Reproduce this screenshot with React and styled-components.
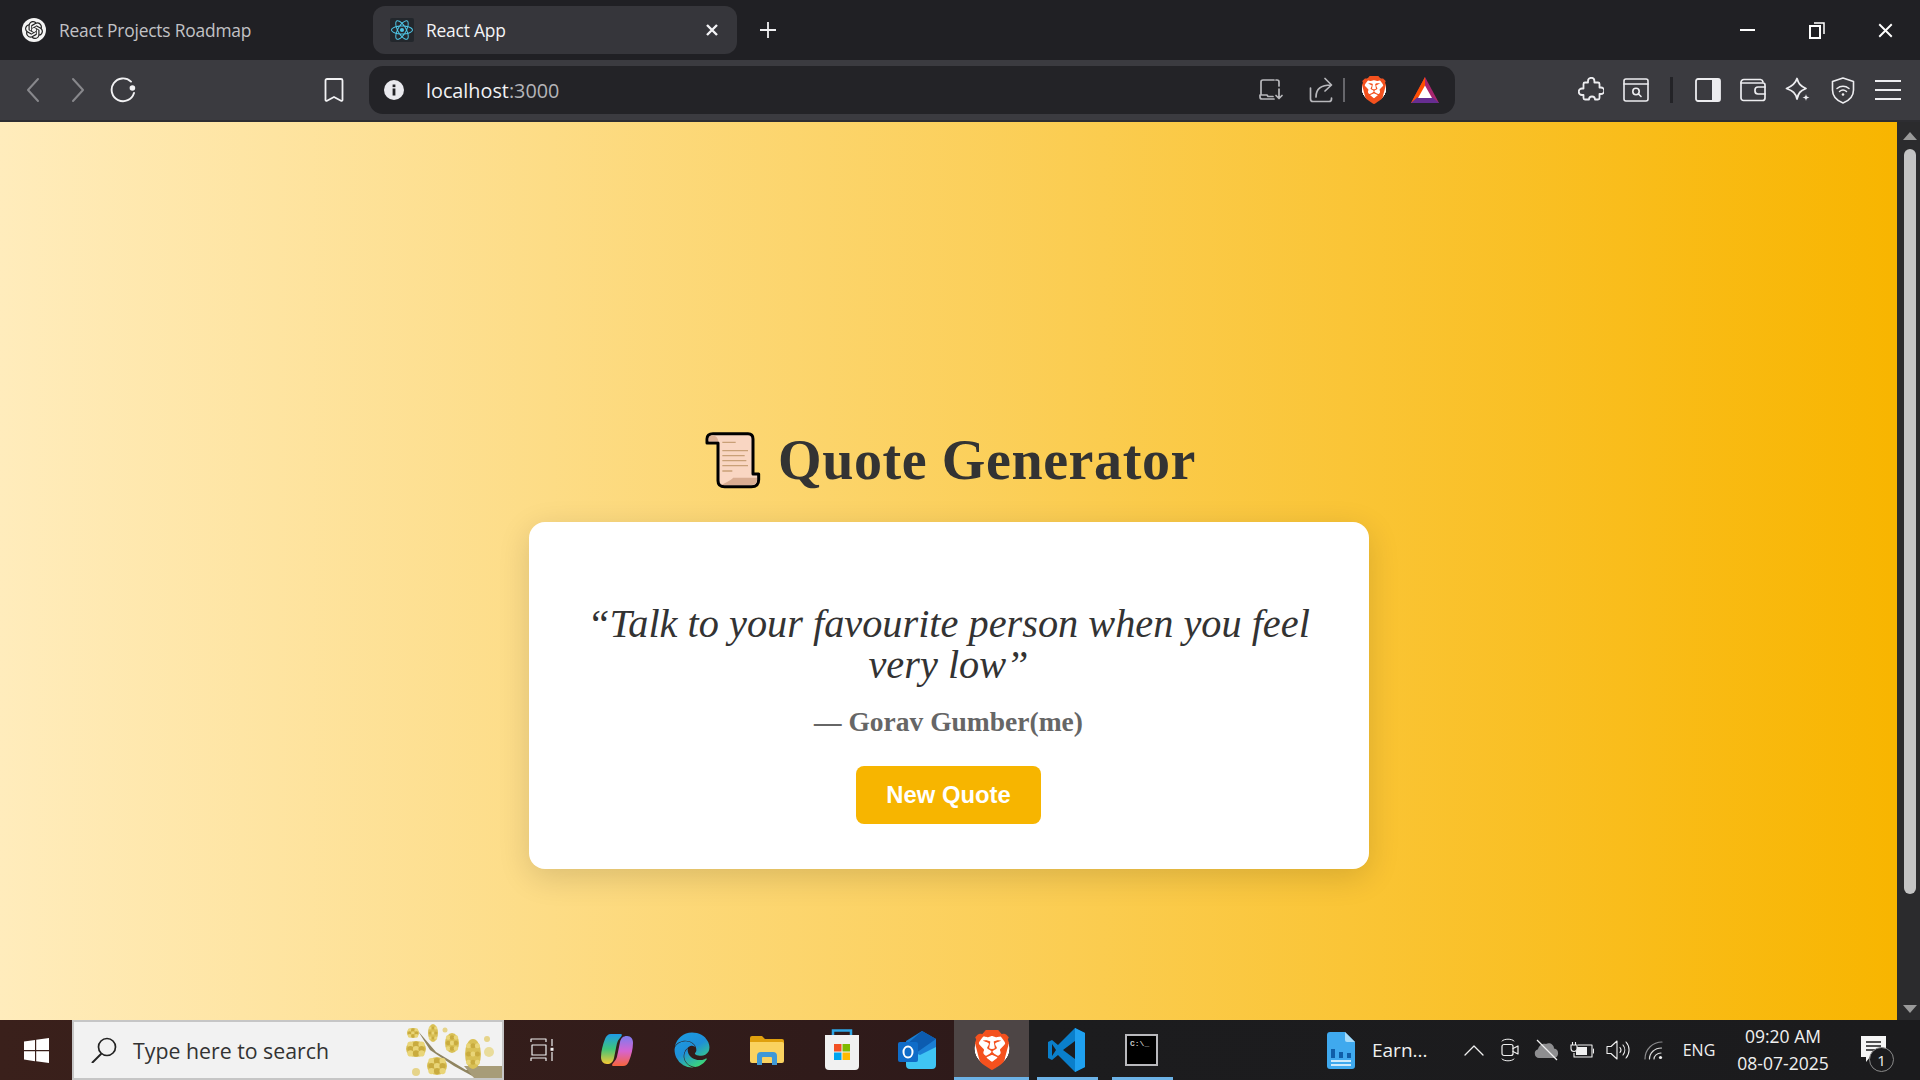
import React from 'react'
import styled, { createGlobalStyle } from 'styled-components'
import { SiOpenai, SiReact, SiBrave } from 'react-icons/si'
import { FaEdge } from 'react-icons/fa'

const GlobalStyle = createGlobalStyle`
	html, body {
		margin: 0;
		padding: 0;
		overflow: hidden;
		background: #202024;
	}
	* {
		box-sizing: border-box;
	}
`

const Screen = styled.div`
	display: grid;
	grid-template-rows: 60px 62px 898px 60px;
	width: 1920px;
	height: 1080px;
	overflow: hidden;
	font-family: 'Open Sans', 'Noto Sans', sans-serif;
`

const TabStrip = styled.div`
	display: flex;
	align-items: center;
	background: #202024;
`

const Tab = styled.div`
	display: flex;
	align-items: center;
	width: ${p => (p.$active ? '364px' : '373px')};
	height: 48px;
	padding: 0 ${p => (p.$active ? '19px' : '22px')} 0 ${p => (p.$active ? '17px' : '22px')};
	border-radius: 12px;
	background: ${p => (p.$active ? '#36363b' : 'transparent')};
	color: ${p => (p.$active ? '#f4f4f6' : '#c2c2c6')};
	font-size: 17.4px;
	letter-spacing: -0.2px;
`

const FaviconDisc = styled.span`
	display: flex;
	align-items: center;
	justify-content: center;
	flex: none;
	width: 24px;
	height: 24px;
	border-radius: 50%;
	background: #f4f4f4;
	color: #222222;
`

const FaviconTile = styled.span`
	display: flex;
	align-items: center;
	justify-content: center;
	flex: none;
	width: 24px;
	height: 24px;
	border-radius: 2px;
	background: #23272c;
	color: #4fc6e6;
`

const TabTitle = styled.span`
	flex: 1;
	margin-left: ${p => (p.$active ? '12px' : '13px')};
	white-space: nowrap;
`

const PlusButton = styled.div`
	display: flex;
	justify-content: center;
	width: 62px;
`

const WindowControls = styled.div`
	display: flex;
	align-items: center;
	margin-left: auto;
`

const WindowButton = styled.div`
	display: flex;
	align-items: center;
	justify-content: center;
	width: 69px;
`

const Toolbar = styled.div`
	display: flex;
	align-items: center;
	height: 62px;
	padding: 0 0 0 10px;
	background: #3b3b40;
	border-bottom: 2px solid #2d2d31;
`

const ToolButton = styled.div`
	display: flex;
	align-items: center;
	justify-content: center;
	flex: none;
	width: ${p => p.$width || 45}px;
	margin-left: ${p => p.$offset || 0}px;
`

const UrlBar = styled.div`
	display: flex;
	align-items: center;
	flex: none;
	width: 1086px;
	height: 48px;
	margin-left: 13px;
	padding: 0 8px 0 15px;
	border-radius: 14px;
	background: #232327;
`

const UrlText = styled.span`
	margin-left: 22px;
	color: #f2f2f4;
	font-size: 19.8px;
`

const UrlPort = styled.span`
	color: #b4b4b8;
`

const UrlActions = styled.div`
	display: flex;
	align-items: center;
	margin-left: auto;
`

const Divider = styled.div`
	flex: none;
	width: ${p => p.$thick || 2}px;
	height: ${p => p.$height || 24}px;
	background: ${p => p.$color || '#66666b'};
`

const ToolGroup = styled.div`
	display: flex;
	align-items: center;
	margin-left: 113px;
`

const DividerCell = styled.div`
	display: flex;
	justify-content: center;
	width: 27px;
`

const Viewport = styled.div`
	display: flex;
	height: 898px;
`

const Page = styled.main`
	display: flex;
	flex: 1;
	flex-direction: column;
	align-items: center;
	padding-top: 304px;
	background: linear-gradient(90deg, #ffecbc 0%, #f8b500 100%);
`

const Heading = styled.h1`
	display: flex;
	align-items: center;
	gap: 17px;
	height: 68px;
	margin: 0 0 28px;
	padding-left: 4px;
	color: #333333;
	font-family: 'Liberation Serif', serif;
	font-size: 56px;
	font-weight: 700;
	letter-spacing: 0.6px;
`

const Card = styled.section`
	display: flex;
	flex-direction: column;
	align-items: center;
	width: 840px;
	height: 347px;
	padding: 81px 40px 0;
	border-radius: 16px;
	background: #ffffff;
	box-shadow: 0 8px 32px rgba(0, 0, 0, 0.14);
`

const QuoteText = styled.p`
	margin: 0;
	color: #333333;
	font-family: 'Liberation Serif', serif;
	font-size: 40.3px;
	font-style: italic;
	line-height: 41px;
	text-align: center;
`

const Author = styled.p`
	margin: 17px 0 0;
	color: #666666;
	font-family: 'Liberation Serif', serif;
	font-size: 27.5px;
	font-weight: 700;
	line-height: 40px;
`

const QuoteButton = styled.button`
	width: 185px;
	height: 58px;
	margin-top: 24px;
	border: 0;
	border-radius: 8px;
	background: #f7b500;
	color: #ffffff;
	font-family: 'Liberation Sans', sans-serif;
	font-size: 23.8px;
	font-weight: 700;
`

const Scrollbar = styled.div`
	display: flex;
	flex: none;
	flex-direction: column;
	align-items: center;
	width: 23px;
	padding: 10px 0 0 2px;
	background: #2b2b2d;
`

const ScrollArrow = styled.div`
	width: 0;
	height: 0;
	border-left: 7px solid transparent;
	border-right: 7px solid transparent;
	border-${p => (p.$down ? 'top' : 'bottom')}: 8px solid #9a9a9a;
`

const ScrollThumb = styled.div`
	width: 12px;
	height: 745px;
	margin: 9px 0 111px;
	border-radius: 6px;
	background: #c4c4c4;
`

const Taskbar = styled.footer`
	display: flex;
	align-items: stretch;
	height: 60px;
	background: linear-gradient(90deg, #3a201b 0%, #2e1a1a 50.8%, #1c1c1e 53.6%, #1b1b1d 100%);
	color: #f0f0f0;
`

const StartButton = styled.div`
	display: flex;
	align-items: center;
	justify-content: center;
	flex: none;
	width: 72px;
`

const SearchBox = styled.div`
	display: flex;
	align-items: center;
	flex: none;
	width: 432px;
	padding-left: 17px;
	border: 2px solid #c6c6c6;
	background: #f2f2f2;
	color: #333333;
	font-size: 21.3px;
	overflow: hidden;
`

const SearchLabel = styled.span`
	flex: 1;
	margin-left: 16px;
	white-space: nowrap;
`

const AppCell = styled.div`
	display: flex;
	align-items: center;
	justify-content: center;
	flex: none;
	position: relative;
	width: 75px;
	background: ${p => (p.$focused ? '#4d4545' : 'transparent')};
	&::after {
		content: '';
		display: ${p => (p.$running ? 'block' : 'none')};
		position: absolute;
		left: ${p => (p.$focused ? 0 : '8px')};
		right: ${p => (p.$focused ? 0 : '6px')};
		bottom: 0;
		height: 3px;
		background: #6cb2e6;
	}
`

const OpenDoc = styled.div`
	display: flex;
	align-items: center;
	flex: none;
	gap: 17px;
	width: 129px;
	margin-left: auto;
	font-size: 19px;
`

const Tray = styled.div`
	display: flex;
	align-items: center;
	flex: none;
`

const TrayCell = styled.div`
	display: flex;
	align-items: center;
	justify-content: center;
	width: 36px;
`

const Lang = styled.div`
	width: 54px;
	font-size: 16px;
	text-align: center;
`

const Clock = styled.div`
	width: 114px;
	font-size: 17.5px;
	line-height: 27px;
	text-align: center;
`

const Notify = styled.div`
	display: flex;
	justify-content: center;
	position: relative;
	width: 66px;
	margin-right: 14px;
`

const NotifyBadge = styled.span`
	display: flex;
	align-items: center;
	justify-content: center;
	position: absolute;
	top: 11px;
	left: 29px;
	width: 25px;
	height: 25px;
	border: 1.5px solid #8a8a8a;
	border-radius: 50%;
	background: #1b1b1d;
	color: #f0f0f0;
	font-size: 15px;
`

const ConsoleIcon = styled.div`
	width: 33px;
	height: 32px;
	padding: 4px 3px 2px;
	border: 2px solid #b9b9bd;
	background: #000000;
	color: #c8c8c8;
	font-family: 'Liberation Mono', monospace;
	font-size: 8px;
	font-weight: 700;
	line-height: 8px;
`

const BraveBadge = styled.span`
	display: flex;
	flex: none;
	border-radius: 40%;
	background: radial-gradient(circle at 50% 46%, #ffffff 0 58%, transparent 60%);
	color: #f4511e;
`

const stroke = { fill: 'none', stroke: 'currentColor', strokeLinecap: 'round', strokeLinejoin: 'round' }

const BraveIcon = ({ size = 28 }) => (
	<BraveBadge>
		<SiBrave size={size} />
	</BraveBadge>
)

const CloseIcon = ({ size = 12, width = 2.4, color = '#f4f4f6' }) => (
	<svg width={size} height={size} viewBox="0 0 12 12" color={color}>
		<path d="M1 1 11 11M11 1 1 11" {...stroke} strokeWidth={width} strokeLinecap="butt" />
	</svg>
)

const PlusIcon = () => (
	<svg width="16" height="16" viewBox="0 0 16 16" color="#f0f0f2">
		<path d="M8 0v16M0 8h16" {...stroke} strokeWidth="1.8" strokeLinecap="butt" />
	</svg>
)

const MinimizeIcon = () => (
	<svg width="15" height="2" viewBox="0 0 15 2">
		<rect width="15" height="2" fill="#fff" />
	</svg>
)

const RestoreIcon = () => (
	<svg width="16" height="17" viewBox="0 0 16 17" color="#fff">
		<rect x="1" y="4" width="10" height="12" {...stroke} strokeWidth="2" strokeLinejoin="miter" />
		<path d="M5 1h10v11" {...stroke} strokeWidth="1.5" strokeLinecap="butt" strokeLinejoin="miter" />
	</svg>
)

const ChevronIcon = ({ flip }) => (
	<svg width="14" height="26" viewBox="0 0 14 26" color="#88888c">
		<path d={flip ? 'M2 2 12 13 2 24' : 'M12 2 2 13 12 24'} {...stroke} strokeWidth="2" />
	</svg>
)

const ReloadIcon = () => (
	<svg width="26" height="26" viewBox="0 0 26 26" color="#f2f2f4">
		<path d="M21 4.6A11.4 11.4 0 1 0 24 16" {...stroke} strokeWidth="1.9" />
		<circle cx="22.4" cy="11" r="2.8" fill="#f2f2f4" />
	</svg>
)

const BookmarkIcon = () => (
	<svg width="20" height="26" viewBox="0 0 20 26" color="#f2f2f4">
		<path d="M3 2h14a1.5 1.5 0 0 1 1.500 1.500V23a1 1 0 0 1-1.500.8L10 20l-7 3.800A1 1 0 0 1 1.500 23V3.500A1.500 1.500 0 0 1 3 2Z" {...stroke} strokeWidth="1.8" />
	</svg>
)

const InfoIcon = () => (
	<svg width="20" height="20" viewBox="0 0 20 20">
		<circle cx="10" cy="10" r="10" fill="#e9e9ee" />
		<rect x="8.600" y="8.500" width="2.800" height="7" fill="#232327" />
		<rect x="8.600" y="4.500" width="2.800" height="2.600" fill="#232327" />
	</svg>
)

const InstallIcon = () => (
	<svg width="26" height="24" viewBox="0 0 26 24" color="#b8b8bc">
		<path d="M16 2H5a2 2 0 0 0-2 2v12M18 2h1a2 2 0 0 1 2 2v4M2 17v2a2 2 0 0 0 2 2h12M2 17h7l1 1.500h5" {...stroke} strokeWidth="1.7" />
		<path d="M21 11v9M18 17.500l3 3 3-3" {...stroke} strokeWidth="1.7" />
	</svg>
)

const ShareIcon = () => (
	<svg width="24" height="26" viewBox="0 0 24 26" color="#b8b8bc">
		<path d="M1.500 11v11a2.500 2.500 0 0 0 2.500 2.500h16a2.500 2.500 0 0 0 2.500-2.500v-1" {...stroke} strokeWidth="1.7" />
		<path d="M7 20c0-8 5-12 15-12M16 1.500 22.500 8 16 14" {...stroke} strokeWidth="1.7" />
	</svg>
)

const BatIcon = () => (
	<svg width="28" height="26" viewBox="0 0 28 26">
		<path d="M14 0 28 26H0Z" fill="#a8266f" />
		<path d="M14 0 0 26h7L14 13Z" fill="#ff5000" />
		<path d="M0 26h28l-6-5.500H6Z" fill="#662d91" />
		<path d="M14 8.500 21 21H7Z" fill="#ffffff" />
	</svg>
)

const PuzzleIcon = () => (
	<svg width="26" height="26" viewBox="0 0 26 26" color="#ededf0">
		<path d="M10 5.500V4a3.200 3.200 0 0 1 6.400 0v1.500H20a1.500 1.500 0 0 1 1.500 1.500v3.500H23a3 3 0 0 1 0 6.500h-1.500V21a1.500 1.500 0 0 1-1.500 1.500h-3a3 3 0 0 0-6 0H7a1.500 1.500 0 0 1-1.500-1.500v-3H4A3.200 3.200 0 0 1 4 11.500h1.500V7A1.500 1.500 0 0 1 7 5.500Z" {...stroke} strokeWidth="1.800" />
	</svg>
)

const WindowSearchIcon = () => (
	<svg width="26" height="24" viewBox="0 0 26 24" color="#ededf0">
		<rect x="1" y="1" width="24" height="22" rx="2" {...stroke} strokeWidth="1.600" />
		<path d="M1 6h24" {...stroke} strokeWidth="1.600" />
		<circle cx="13" cy="13.500" r="3.200" {...stroke} strokeWidth="1.600" />
		<path d="m15.500 16 2.500 2.500" {...stroke} strokeWidth="1.600" />
	</svg>
)

const SidebarIcon = () => (
	<svg width="26" height="24" viewBox="0 0 26 24">
		<rect x="1" y="1" width="24" height="22" rx="2" fill="none" stroke="#ededf0" strokeWidth="1.800" />
		<path d="M17 1h6a2 2 0 0 1 2 2v18a2 2 0 0 1-2 2h-6Z" fill="#ededf0" />
	</svg>
)

const WalletIcon = () => (
	<svg width="26" height="24" viewBox="0 0 26 24" color="#ededf0">
		<path d="M1 5a3 3 0 0 1 3-3.500h16.500A3 3 0 0 1 23 4" {...stroke} strokeWidth="1.700" />
		<path d="M1 5v15a2.500 2.500 0 0 0 2.500 2.500h19A2.500 2.500 0 0 0 25 20V7a2 2 0 0 0-2-2H1" {...stroke} strokeWidth="1.700" />
		<path d="M25 9h-7a3 3 0 0 0-3 3v1a3 3 0 0 0 3 3h7" {...stroke} strokeWidth="1.700" />
	</svg>
)

const LeoIcon = () => (
	<svg width="26" height="26" viewBox="0 0 26 26" color="#ededf0">
		<path d="M12 1.500c1.500 5 3 7.500 9 10-6 2.500-7.500 4.500-9 10.500-1.500-6-4-8-10.500-10.500C7.500 9 10.500 6.500 12 1.500Z" {...stroke} strokeWidth="1.800" />
		<path d="M21 17c.4 2.300 1 3 3.500 3.500-2.500.5-3.100 1.200-3.500 3.500-.4-2.300-1-3-3.500-3.500 2.500-.5 3.100-1.200 3.500-3.500Z" fill="#ededf0" />
	</svg>
)

const VpnIcon = () => (
	<svg width="24" height="27" viewBox="0 0 24 27" color="#ededf0">
		<path d="M12 1 22.500 4.500V13c0 6-4 10.500-10.500 13C5.500 23.500 1.500 19 1.500 13V4.500Z" {...stroke} strokeWidth="1.600" />
		<path d="M6 11.500c3.500-3 8.500-3 12 0M8.500 14.500c2-1.700 5-1.700 7 0" {...stroke} strokeWidth="1.500" />
		<circle cx="12" cy="17.500" r="1.300" fill="#ededf0" />
	</svg>
)

const MenuIcon = () => (
	<svg width="26" height="22" viewBox="0 0 26 22" color="#ededf0">
		<path d="M0 2h26M0 11h26M0 20h26" {...stroke} strokeWidth="2" strokeLinecap="butt" />
	</svg>
)

const ScrollEmoji = () => (
	<svg width="56" height="58" viewBox="36 26 168 174">
		<path d="M60 34H165Q180 34 180 50V155H197V172Q197 193 175 193H95Q75 193 75 175V62H42V50Q42 34 60 34Z" fill="#f9d6c2" stroke="#000" strokeWidth="9" strokeLinejoin="round" />
		<path d="M47 57V50Q47 39 60 39 74 42 76 57Z" fill="#deb196" />
		<path d="M85 188Q120 170 120 166H192V172Q192 188 175 188Z" fill="#d9ad92" />
		<g stroke="#c9a077" strokeWidth="4">
			<path d="M88 60h40M88 85h77M88 100h67M88 115h72M88 130h77M88 146h30" />
		</g>
	</svg>
)

const WindowsLogo = () => (
	<svg width="25" height="25" viewBox="0 0 25 25">
		<path d="M0 3.500 11 2v10H0ZM12.200 1.800 25 0v12H12.200ZM0 13.200h11v10L0 21.500ZM12.200 13.200H25V25l-12.800-1.800Z" fill="#ffffff" />
	</svg>
)

const SearchGlass = () => (
	<svg width="26" height="26" viewBox="0 0 26 26" color="#222">
		<circle cx="16" cy="10" r="8.500" {...stroke} strokeWidth="1.700" />
		<path d="M10 17 1.500 25.500" {...stroke} strokeWidth="1.900" />
	</svg>
)

const blossoms = [
	[9, 11, 6, 5],
	[12, 27, 10, 8],
	[29, 11, 5, 9],
	[48, 21, 7, 10],
	[69, 32, 8, 15],
	[33, 44, 10, 9],
]

const BlossomBranch = () => (
	<svg width="98" height="56" viewBox="0 0 98 56">
		<path d="M14 9 32 30l30 18 36-4v12H72L50 44 26 28Z" fill="#8f8460" />
		<path d="M60 44h38v12H70Z" fill="#a79c78" />
		{blossoms.map(([cx, cy, rx, ry]) => (
			<g key={`${cx}-${cy}`}>
				<ellipse cx={cx} cy={cy} rx={rx} ry={ry} fill="#d9c055" />
				{[-1, 0, 1].flatMap(col =>
					[-1, 0, 1].map(row => (
						<circle
							key={`${col}${row}`}
							cx={cx + (col * rx) / 1.8}
							cy={cy + (row * ry) / 1.8}
							r={rx / 3.2}
							fill={(col + row) % 2 === 0 ? '#e9d578' : '#c9ab3f'}
						/>
					)),
				)}
			</g>
		))}
		<circle cx="85" cy="30" r="5" fill="#e9dc9b" />
		<circle cx="12" cy="50" r="4" fill="#e6d48a" />
		<circle cx="41" cy="8" r="2.500" fill="#e6d48a" />
		<circle cx="83" cy="17" r="3" fill="#e6d48a" />
	</svg>
)

const TaskViewIcon = () => (
	<svg width="24" height="24" viewBox="0 0 24 24" color="#f0f0f0">
		<path d="M1 4V1h15v3M1 23v-3h15v3" {...stroke} strokeWidth="1.200" strokeLinecap="butt" />
		<rect x="2" y="7" width="14" height="10" {...stroke} strokeWidth="1.200" />
		<path d="M22 1v7M22 14v9" {...stroke} strokeWidth="1.200" strokeLinecap="butt" />
		<rect x="20.500" y="9.800" width="3" height="3" fill="#f0f0f0" />
	</svg>
)

const CopilotIcon = () => (
	<svg width="34" height="34" viewBox="0 0 34 34">
		<defs>
			<linearGradient id="copilotA" x1="0" y1="0" x2="0" y2="1">
				<stop offset="0" stopColor="#1e9be8" />
				<stop offset=".5" stopColor="#3fc47a" />
				<stop offset="1" stopColor="#f7c933" />
			</linearGradient>
			<linearGradient id="copilotB" x1="0" y1="0" x2="0" y2="1">
				<stop offset="0" stopColor="#7c7cf0" />
				<stop offset=".5" stopColor="#d664d0" />
				<stop offset="1" stopColor="#f7643c" />
			</linearGradient>
		</defs>
		<path d="M11 1h9c3 0 2 2 0 4-3 3-3 6-4 10l-2 10c-1 4-3 6-7 6-4 0-6-3-6-7 0-6 2-13 4-18 1-3 3-5 6-5Z" fill="url(#copilotA)" />
		<path d="M23 33h-9c-3 0-2-2 0-4 3-3 3-6 4-10l2-10c1-4 3-6 7-6 4 0 6 3 6 7 0 6-2 13-4 18-1 3-3 5-6 5Z" fill="url(#copilotB)" />
	</svg>
)

const EdgeIcon = () => (
	<>
		<svg width="0" height="0">
			<defs>
				<linearGradient id="edgeGrad" x1="0" y1="0" x2="0.6" y2="1">
					<stop offset="0" stopColor="#1b9de2" />
					<stop offset=".55" stopColor="#1f8fd8" />
					<stop offset="1" stopColor="#3bd37c" />
				</linearGradient>
			</defs>
		</svg>
		<FaEdge size={36} fill="url(#edgeGrad)" />
	</>
)

const FolderIcon = () => (
	<svg width="34" height="30" viewBox="0 0 34 30">
		<path d="M0 3a2 2 0 0 1 2-2h10l3 3h17a2 2 0 0 1 2 2v4H0Z" fill="#e0a00e" />
		<path d="M0 7h32a2 2 0 0 1 2 2v17a2 2 0 0 1-2 2H2a2 2 0 0 1-2-2Z" fill="#fad260" />
		<path d="M7 30V21a4 4 0 0 1 4-4h12a4 4 0 0 1 4 4v9h-5v-7a1 1 0 0 0-1-1h-8a1 1 0 0 0-1 1v7Z" fill="#3f98d6" />
	</svg>
)

const StoreIcon = () => (
	<svg width="36" height="42" viewBox="0 0 36 42">
		<path d="M9 7V1.500h18V7" fill="none" stroke="#2ea6e6" strokeWidth="2.500" />
		<path d="M1 6h34v31a4 4 0 0 1-4 4H5a4 4 0 0 1-4-4Z" fill="#f1f1f1" />
		<path d="M10 15h7.500v7.500H10Z" fill="#f25022" />
		<path d="M18.500 15H26v7.500h-7.500Z" fill="#7fba00" />
		<path d="M10 23.500h7.500V31H10Z" fill="#00a4ef" />
		<path d="M18.500 23.500H26V31h-7.500Z" fill="#ffb900" />
	</svg>
)

const OutlookIcon = () => (
	<svg width="38" height="38" viewBox="0 0 38 38">
		<path d="M8 10 24 0l14 8v16H8Z" fill="#1a7fd4" />
		<path d="M24 0l14 8-20 14-10-8Z" fill="#0c5cb0" />
		<path d="M8 18l14 6 16-8v18a4 4 0 0 1-4 4H12a4 4 0 0 1-4-4Z" fill="#3fc5f4" />
		<rect y="11" width="20" height="20" rx="2" fill="#0f6cc8" />
		<ellipse cx="10" cy="21" rx="4.500" ry="5.500" fill="none" stroke="#fff" strokeWidth="2" />
	</svg>
)

const VsCodeIcon = () => (
	<svg width="37" height="44" viewBox="0 0 37 44">
		<path d="M27 0 37 5v34L27 44 10 27l-6 5-4-2V14l4-2 6 5Z" fill="#0a7fcb" />
		<path d="M27 0 37 5v34L27 44Z" fill="#1fa0ef" />
		<path d="M27 13 15 22l12 9Z" fill="#1c1c1e" />
		<path d="M4 16 8 22l-4 6Z" fill="#1c1c1e" />
	</svg>
)

const DocIcon = () => (
	<svg width="28" height="37" viewBox="0 0 28 37">
		<path d="M3 0h15l10 10v24a3 3 0 0 1-3 3H3a3 3 0 0 1-3-3V3a3 3 0 0 1 3-3Z" fill="#3fa9ee" />
		<path d="M18 0l10 10H20a2 2 0 0 1-2-2Z" fill="#a8dcfa" />
		<path d="M4 17h4v9H4ZM12 20h4v6h-4ZM20 21h4v5h-4Z" fill="#0f5ea8" />
		<path d="M4 29h20M4 33h20" stroke="#fff" strokeWidth="1.600" />
	</svg>
)

const TrayChevron = () => (
	<svg width="20" height="12" viewBox="0 0 20 12" color="#f0f0f0">
		<path d="M1 11 10 2l9 9" {...stroke} strokeWidth="1.300" />
	</svg>
)

const MeetIcon = () => (
	<svg width="18" height="26" viewBox="0 0 18 26" color="#f0f0f0">
		<path d="M1 4C3 1.500 11 1.500 13 4M1 22c2 2.500 10 2.500 12 0" {...stroke} strokeWidth="1" />
		<rect x="1" y="7.500" width="11" height="11" rx="2" {...stroke} strokeWidth="1.200" />
		<path d="m12 11.500 5-2.500v8l-5-2.500" {...stroke} strokeWidth="1.200" />
	</svg>
)

const CloudOffIcon = () => (
	<svg width="25" height="22" viewBox="0 0 25 22">
		<path d="M5 19a4.500 4.500 0 0 1-1-8.800C5 6 9 4 12 5c3-2 8 0 8 4.500a4.800 4.800 0 0 1 0 9.500Z" fill="#8e8e90" />
		<path d="M3 1 23 21" stroke="#f0f0f0" strokeWidth="1.300" />
	</svg>
)

const BatteryIcon = () => (
	<svg width="24" height="18" viewBox="0 0 24 18" color="#f0f0f0">
		<path d="M8 4h14v12H4v-4" {...stroke} strokeWidth="1.100" strokeLinecap="butt" />
		<rect x="6" y="6" width="11" height="8" fill="#f0f0f0" />
		<path d="M23.500 8v4" {...stroke} strokeWidth="1.100" />
		<path d="M1 4h6v3.500a3 3 0 0 1-6 0ZM2.500 4V1M5.500 4V1" fill="#1b1b1d" stroke="#f0f0f0" strokeWidth="1.100" />
	</svg>
)

const VolumeIcon = () => (
	<svg width="24" height="22" viewBox="0 0 24 22" color="#f0f0f0">
		<path d="M1 7.500h4L11 2v18l-6-5.500H1Z" {...stroke} strokeWidth="1.100" />
		<path d="M14 8.500a4 4 0 0 1 0 5M17 6a8 8 0 0 1 0 10M20 3a12 12 0 0 1 0 16" {...stroke} strokeWidth="1.100" />
	</svg>
)

const WifiIcon = () => (
	<svg width="20" height="20" viewBox="0 0 20 20" color="#8c8c8e">
		<path d="M1 19C1 9 9 2 18 2" {...stroke} strokeWidth="1.200" />
		<path d="M5.500 19c0-6 5-11 12-11M10 19c0-3 3-6 7-6" {...stroke} color="#dcdcdc" strokeWidth="1.200" />
		<circle cx="16.500" cy="17.500" r="1.600" fill="#f0f0f0" />
	</svg>
)

const NotifyIcon = () => (
	<svg width="25" height="28" viewBox="0 0 25 28">
		<path d="M0 0h25v21H9l-4 5v-5H0Z" fill="#f6f6f6" />
		<path d="M5 6h15M5 10h15M5 14h10" stroke="#1b1b1d" strokeWidth="1.300" />
	</svg>
)

const apps = [
	{ id: 'taskview', icon: <TaskViewIcon /> },
	{ id: 'copilot', icon: <CopilotIcon /> },
	{ id: 'edge', icon: <EdgeIcon /> },
	{ id: 'files', icon: <FolderIcon /> },
	{ id: 'store', icon: <StoreIcon /> },
	{ id: 'outlook', icon: <OutlookIcon /> },
	{ id: 'brave', icon: <BraveIcon size={40} />, running: true, focused: true },
	{ id: 'vscode', icon: <VsCodeIcon />, running: true },
	{ id: 'console', icon: <ConsoleIcon>C:\_</ConsoleIcon>, running: true },
]

const trayIcons = [
	{ id: 'more', icon: <TrayChevron /> },
	{ id: 'meet', icon: <MeetIcon /> },
	{ id: 'cloud', icon: <CloudOffIcon /> },
	{ id: 'battery', icon: <BatteryIcon /> },
	{ id: 'volume', icon: <VolumeIcon /> },
	{ id: 'wifi', icon: <WifiIcon /> },
]

export default function App() {
	return (
		<>
			<GlobalStyle />
			<Screen>
				<TabStrip>
					<Tab>
						<FaviconDisc>
							<SiOpenai size={18} />
						</FaviconDisc>
						<TabTitle>React Projects Roadmap</TabTitle>
					</Tab>
					<Tab $active>
						<FaviconTile>
							<SiReact size={22} />
						</FaviconTile>
						<TabTitle $active>React App</TabTitle>
						<CloseIcon />
					</Tab>
					<PlusButton>
						<PlusIcon />
					</PlusButton>
					<WindowControls>
						<WindowButton>
							<MinimizeIcon />
						</WindowButton>
						<WindowButton>
							<RestoreIcon />
						</WindowButton>
						<WindowButton>
							<CloseIcon size={15} width={1.5} color="#fff" />
						</WindowButton>
					</WindowControls>
				</TabStrip>

				<Toolbar>
					<ToolButton>
						<ChevronIcon />
					</ToolButton>
					<ToolButton>
						<ChevronIcon flip />
					</ToolButton>
					<ToolButton>
						<ReloadIcon />
					</ToolButton>
					<ToolButton $offset={166}>
						<BookmarkIcon />
					</ToolButton>
					<UrlBar>
						<InfoIcon />
						<UrlText>
							localhost<UrlPort>:3000</UrlPort>
						</UrlText>
						<UrlActions>
							<ToolButton $width={55}>
								<InstallIcon />
							</ToolButton>
							<ToolButton $width={45}>
								<ShareIcon />
							</ToolButton>
							<Divider />
							<ToolButton $width={58}>
								<BraveIcon />
							</ToolButton>
							<ToolButton $width={44}>
								<BatIcon />
							</ToolButton>
						</UrlActions>
					</UrlBar>
					<ToolGroup>
						<ToolButton>
							<PuzzleIcon />
						</ToolButton>
						<ToolButton>
							<WindowSearchIcon />
						</ToolButton>
						<DividerCell>
							<Divider $thick={3} $height={26} $color="#232327" />
						</DividerCell>
						<ToolButton>
							<SidebarIcon />
						</ToolButton>
						<ToolButton>
							<WalletIcon />
						</ToolButton>
						<ToolButton>
							<LeoIcon />
						</ToolButton>
						<ToolButton>
							<VpnIcon />
						</ToolButton>
						<ToolButton>
							<MenuIcon />
						</ToolButton>
					</ToolGroup>
				</Toolbar>

				<Viewport>
					<Page>
						<Heading>
							<ScrollEmoji />
							Quote Generator
						</Heading>
						<Card>
							<QuoteText>“Talk to your favourite person when you feel very low”</QuoteText>
							<Author>— Gorav Gumber(me)</Author>
							<QuoteButton>New Quote</QuoteButton>
						</Card>
					</Page>
					<Scrollbar>
						<ScrollArrow />
						<ScrollThumb />
						<ScrollArrow $down />
					</Scrollbar>
				</Viewport>

				<Taskbar>
					<StartButton>
						<WindowsLogo />
					</StartButton>
					<SearchBox>
						<SearchGlass />
						<SearchLabel>Type here to search</SearchLabel>
						<BlossomBranch />
					</SearchBox>
					{apps.map(app => (
						<AppCell key={app.id} $running={app.running} $focused={app.focused}>
							{app.icon}
						</AppCell>
					))}
					<OpenDoc>
						<DocIcon />
						Earn...
					</OpenDoc>
					<Tray>
						{trayIcons.map(item => (
							<TrayCell key={item.id}>{item.icon}</TrayCell>
						))}
						<Lang>ENG</Lang>
						<Clock>
							09:20 AM
							<br />
							08-07-2025
						</Clock>
						<Notify>
							<NotifyIcon />
							<NotifyBadge>1</NotifyBadge>
						</Notify>
					</Tray>
				</Taskbar>
			</Screen>
		</>
	)
}
